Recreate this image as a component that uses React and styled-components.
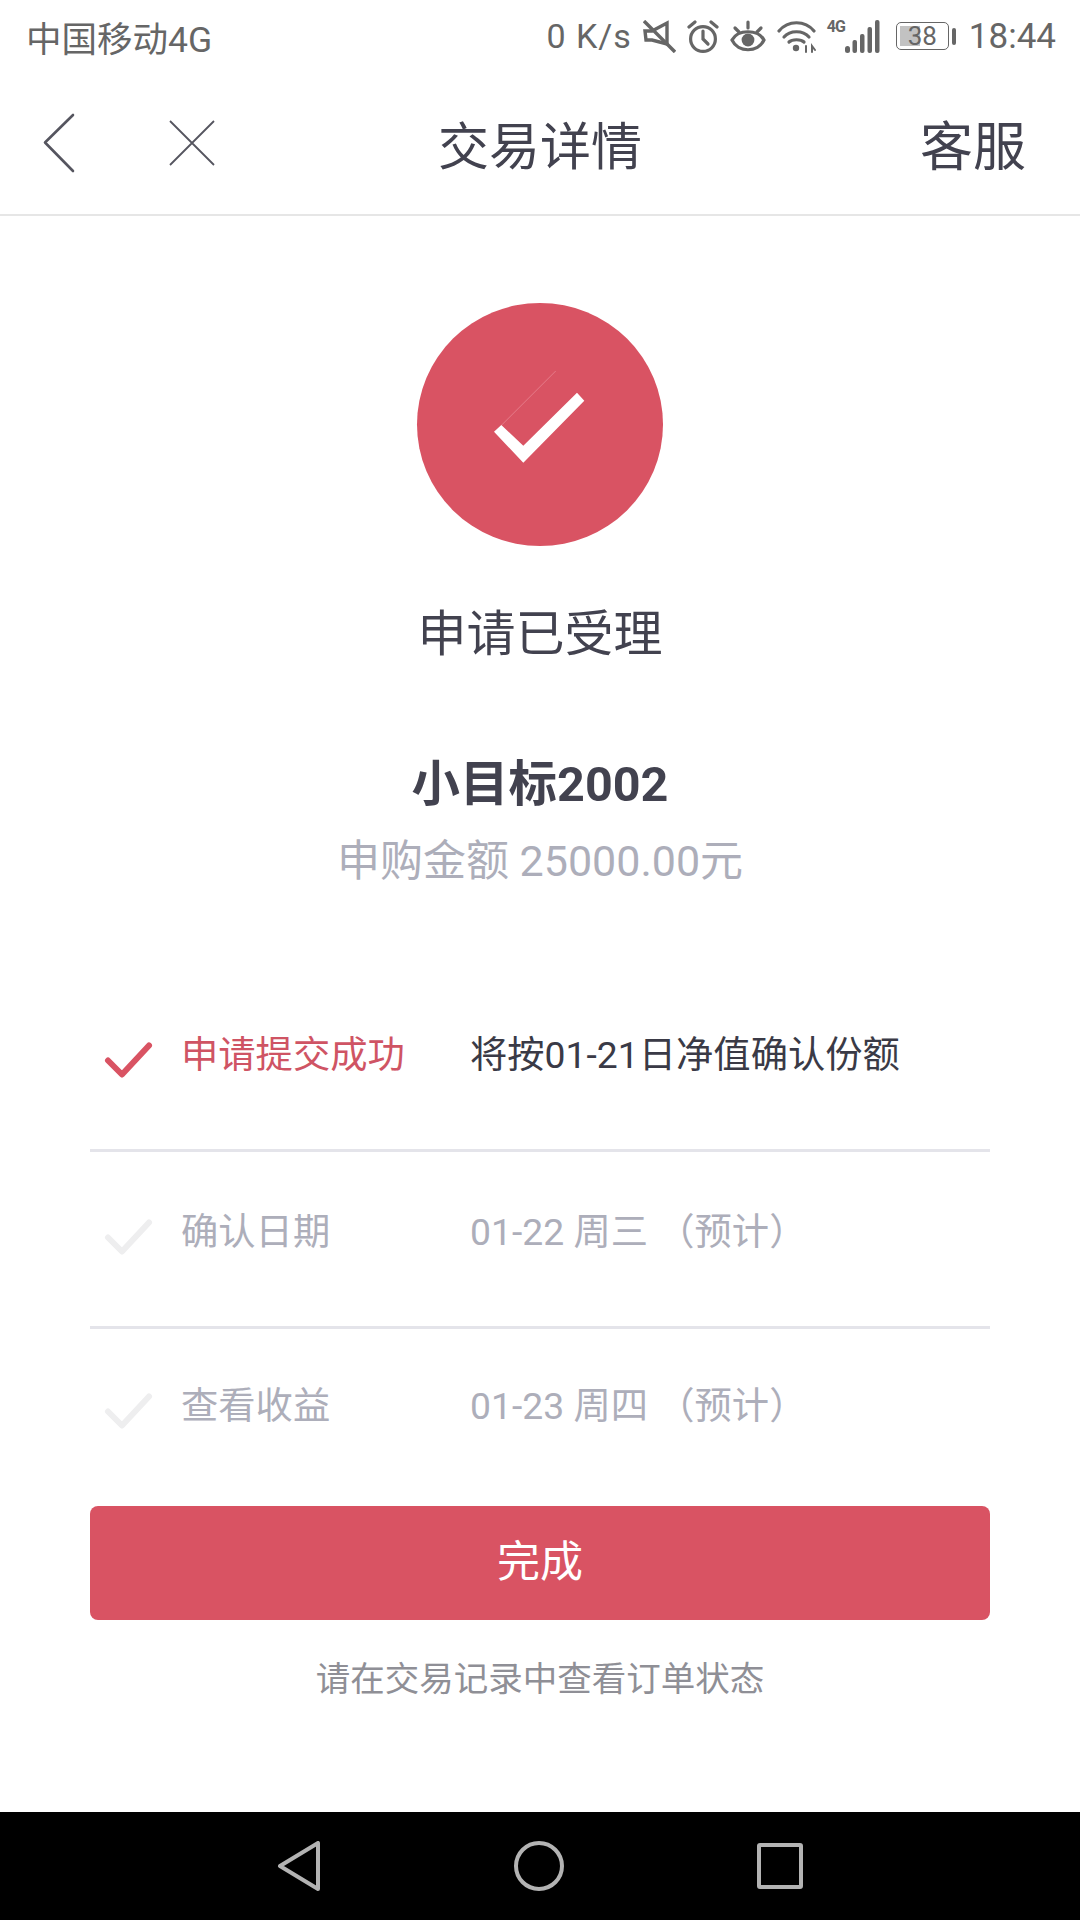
import styled, { createGlobalStyle } from "styled-components";

const Global = createGlobalStyle`
    html, body {
        margin: 0;
        padding: 0;
        background: #fff;
    }
    * {
        box-sizing: border-box;
    }
`

const FONT = `Roboto, "Noto Sans CJK SC", sans-serif`
const RED = "#d95363"

const steps = [
    { name: "申请提交成功", note: "将按01-21日净值确认份额", done: true },
    { name: "确认日期", note: "01-22 周三 （预计）" },
    { name: "查看收益", note: "01-23 周四 （预计）" },
]

const StepCheck = ({ done }) => (
    <CheckIcon viewBox="0 0 50 40" $done={done}>
        <path d="M5 20.5 L19 34.5 L46 5.5" fill="none" stroke="currentColor" strokeWidth="6" strokeLinecap="round" strokeLinejoin="round" />
    </CheckIcon>
)

const StatusIcons = () => (
    <>
        <svg width="33" height="33" viewBox="0 0 33 33" fill="none" stroke="#666" strokeWidth="3.4">
            <path d="M2 11 H9 L24 3 V24 L9 20 H3 Z" />
            <path d="M1 1 L32 32" />
        </svg>
        <svg width="32" height="33" viewBox="0 0 32 33" fill="none" stroke="#666" strokeWidth="3.2" strokeLinecap="round">
            <circle cx="16" cy="19" r="12.4" />
            <path d="M16 11 V19 L21 24" />
            <path d="M2 7 L8 2 M30 7 L24 2" />
        </svg>
        <svg width="36" height="33" viewBox="0 0 36 33" fill="none" stroke="#666" strokeWidth="3.2" strokeLinecap="round">
            <path d="M2 20 C8 9 28 9 34 20 C28 33 8 33 2 20 Z" />
            <circle cx="18" cy="20" r="6.4" fill="#666" stroke="none" />
            <path d="M5 8 L9 12 M18 2 V8 M31 8 L27 12" />
        </svg>
        <svg width="39" height="33" viewBox="0 0 39 33" fill="none" stroke="#666" strokeWidth="3.2" strokeLinecap="round">
            <path d="M2 11 C11 0 28 0 37 11" />
            <path d="M7 17 C13 10 26 10 32 17" />
            <path d="M12 22 C15 19 24 19 27 22" />
            <circle cx="19" cy="28" r="3.2" fill="#666" stroke="none" />
            <path d="M29 26 V32 M35 32 V26 L38 30" strokeWidth="2" />
        </svg>
        <SignalBox>
            <SmallTag>4G</SmallTag>
            <svg width="35" height="33" viewBox="0 0 35 33" fill="#666">
                <rect x="0" y="26" width="5" height="7" rx="2.5" />
                <rect x="7.5" y="20" width="4.5" height="13" rx="2" />
                <rect x="15" y="14" width="4.5" height="19" rx="2" />
                <rect x="22.5" y="7" width="4.5" height="26" rx="2" />
                <rect x="30" y="0" width="4.5" height="33" rx="2" />
            </svg>
        </SignalBox>
        <Battery>
            <BatteryBody>
                <BatteryFill style={{ width: "44%" }} />
                <BatteryText>38</BatteryText>
            </BatteryBody>
            <BatteryCap />
        </Battery>
    </>
)

const App = () => {
    return (
        <Page>
            <Global />
            <StatusBar>
                <Carrier>中国移动4G</Carrier>
                <StatusRight>
                    <Speed>0 K/s</Speed>
                    <StatusIcons />
                    <Clock>18:44</Clock>
                </StatusRight>
            </StatusBar>

            <NavBar>
                <NavLeft>
                    <svg width="34" height="60" viewBox="0 0 34 60" fill="none" stroke="#55555f" strokeWidth="2.6" strokeLinecap="round" strokeLinejoin="round">
                        <path d="M31 2 L3 29.5 L31 58" />
                    </svg>
                    <svg width="46" height="46" viewBox="0 0 46 46" fill="none" stroke="#55555f" strokeWidth="1.8">
                        <path d="M1 1 L45 45 M45 1 L1 45" />
                    </svg>
                </NavLeft>
                <NavTitle>交易详情</NavTitle>
                <NavAction>客服</NavAction>
            </NavBar>

            <Main>
                <Circle>
                    <svg width="246" height="243" viewBox="0 0 246 243">
                        <path d="M84.7 122 L138.7 68" stroke="#ee97a2" strokeWidth="0.6" fill="none" />
                        <polygon fill="#fff" points="77,128.7 84.3,122 106.3,142.7 160,89.7 167.3,97.7 106.3,159.7" />
                    </svg>
                </Circle>
                <Accepted>申请已受理</Accepted>
                <Product>小目标2002</Product>
                <Amount>申购金额 25000.00元</Amount>

                <Steps>
                    {steps.map((s) => (
                        <Step key={s.name}>
                            <StepCheck done={s.done} />
                            <StepName $done={s.done}>{s.name}</StepName>
                            <StepNote $done={s.done}>{s.note}</StepNote>
                        </Step>
                    ))}
                </Steps>

                <DoneButton>完成</DoneButton>
                <Hint>请在交易记录中查看订单状态</Hint>
            </Main>

            <SystemBar>
                <svg width="44" height="50" viewBox="0 0 44 50" fill="none" stroke="#b3b3b3" strokeWidth="4" strokeLinejoin="round">
                    <path d="M3 25 L41 2 V48 Z" />
                </svg>
                <SystemCircle />
                <SystemSquare />
            </SystemBar>
        </Page>
    );
}

export default App;


const Page = styled.div `
    width: 1080px;
    height: 1920px;
    display: flex;
    flex-direction: column;
    background: #fff;
    font-family: ${FONT};
    overflow: hidden;
`

const StatusBar = styled.div `
    height: 72px;
    padding: 0 24px 0 26px;
    display: flex;
    align-items: center;
    justify-content: space-between;
    color: #666;
`

const Carrier = styled.div `
    font-size: 35.5px;
`

const StatusRight = styled.div `
    display: flex;
    align-items: center;
    gap: 11px;
`

const Speed = styled.div `
    font-size: 34px;
    letter-spacing: 1px;
`

const SignalBox = styled.div `
    display: flex;
    align-items: flex-end;
    height: 33px;
    position: relative;
    width: 53px;
    justify-content: flex-end;
`

const SmallTag = styled.span `
    position: absolute;
    left: 0;
    top: -3px;
    font-size: 16px;
    letter-spacing: -1px;
    font-weight: 700;
    color: #666;
`

const Battery = styled.div `
    display: flex;
    align-items: center;
    gap: 3px;
    margin-left: 5px;
`

const BatteryBody = styled.div `
    width: 53px;
    height: 28px;
    border: 1.5px solid #666;
    border-radius: 5px;
    position: relative;
    padding: 3px;
`

const BatteryFill = styled.div `
    height: 100%;
    background: #c2c2c2;
`

const BatteryText = styled.span `
    position: absolute;
    inset: 0;
    display: flex;
    align-items: center;
    justify-content: center;
    font-size: 26px;
    color: #666;
`

const BatteryCap = styled.div `
    width: 4px;
    height: 17px;
    background: #666;
    border-radius: 2px;
`

const Clock = styled.div `
    font-size: 35px;
    margin-left: 2px;
`

const NavBar = styled.div `
    height: 144px;
    padding: 0 54px;
    display: grid;
    grid-template-columns: 1fr auto 1fr;
    align-items: center;
    border-bottom: 2px solid #e6e6e6;
    color: #42424f;
`

const NavLeft = styled.div `
    display: flex;
    align-items: center;
    gap: 93px;
    margin-left: -12px;
`

const NavTitle = styled.div `
    font-size: 51px;
`

const NavAction = styled.div `
    font-size: 53px;
    justify-self: end;
`

const Main = styled.div `
    flex: 1;
    display: flex;
    flex-direction: column;
    align-items: center;
`

const Circle = styled.div `
    margin-top: 87px;
    width: 246px;
    height: 243px;
    border-radius: 50%;
    background: ${RED};
    flex-shrink: 0;
`

const Accepted = styled.div `
    margin-top: 54px;
    font-size: 49px;
    line-height: 70px;
    color: #42424f;
`

const Product = styled.div `
    margin-top: 82px;
    font-size: 48.5px;
    line-height: 66px;
    font-weight: 700;
    color: #42424f;
`

const Amount = styled.div `
    margin-top: 14px;
    font-size: 43px;
    line-height: 58px;
    color: #adaeba;
`

const Steps = styled.div `
    margin-top: 85px;
    width: 900px;
`

const Step = styled.div `
    height: 177px;
    padding: 0 0 20px 13px;
    display: flex;
    align-items: center;
    border-bottom: 3px solid #e4e4ea;

    &:last-child {
        border-bottom-color: transparent;
        padding-bottom: 26px;
    }
`

const CheckIcon = styled.svg `
    width: 50px;
    height: 40px;
    margin-top: 16px;
    flex-shrink: 0;
    color: ${(p) => (p.$done ? RED : "#eeeeef")};
`

const StepName = styled.div `
    margin-left: 28px;
    width: 289px;
    font-size: 37.3px;
    color: ${(p) => (p.$done ? "#cf5464" : "#adaeba")};
`

const StepNote = styled.div `
    font-size: 37.3px;
    color: ${(p) => (p.$done ? "#3a3a46" : "#adaeba")};
`

const DoneButton = styled.button `
    margin-top: 0;
    width: 900px;
    height: 114px;
    border: none;
    border-radius: 8px;
    padding-bottom: 12px;
    background: ${RED};
    color: #fff;
    font-family: ${FONT};
    font-size: 43px;
`

const Hint = styled.div `
    margin-top: 34px;
    font-size: 34.5px;
    line-height: 50px;
    color: #8f8f96;
`

const SystemBar = styled.div `
    height: 108px;
    flex-shrink: 0;
    background: #000;
    display: flex;
    align-items: center;
    justify-content: center;
    gap: 193px;
`

const SystemCircle = styled.div `
    width: 50px;
    height: 50px;
    border: 4px solid #b3b3b3;
    border-radius: 50%;
`

const SystemSquare = styled.div `
    width: 46px;
    height: 46px;
    border: 4px solid #b3b3b3;
    border-radius: 3px;
`
